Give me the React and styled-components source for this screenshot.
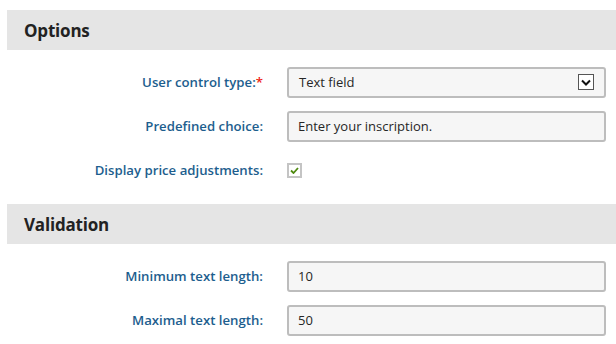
import React from "react";
import styled, { createGlobalStyle } from "styled-components";

const Global = createGlobalStyle`
  html, body { margin: 0; padding: 0; background: #fff; }
  body { font-family: "Open Sans", "Noto Sans", Arial, sans-serif; }
  * { box-sizing: border-box; }
`;

const Page = styled.div`
  padding: 10px 0 0 7px;
  width: 616px;
`;

const SectionHeader = styled.div`
  height: 40px;
  background: #e5e5e5;
  display: flex;
  align-items: center;
  padding-left: 17px;
  margin-top: ${(p) => p.$top || 0}px;
  font-size: 17px;
  font-weight: 700;
  color: #222;
  letter-spacing: -0.2px;
`;

const Form = styled.div`
  display: flex;
  flex-direction: column;
  padding-top: 10px;
`;

const Row = styled.div`
  display: grid;
  grid-template-columns: 256px 1fr;
  column-gap: 24px;
  align-items: center;
  height: 44px;
  padding-right: 10px;
`;

const Label = styled.label`
  text-align: right;
  font-size: 13.2px;
  font-weight: 600;
  color: #1d5e8e;
`;

const Req = styled.span`
  color: #e21;
`;

const TextInput = styled.div`
  height: 31px;
  background: #f6f6f6;
  border: 2px solid #bdbdbd;
  border-radius: 3px;
  display: flex;
  align-items: center;
  padding-left: 9px;
  font-size: 13px;
  color: #262626;
`;

const SelectBox = styled(TextInput)`
  justify-content: space-between;
  padding-right: 10px;
  padding-left: 10px;
`;

const Arrow = styled.span`
  width: 16px;
  height: 16px;
  border: 1px solid #555;
  background: #fff;
  display: flex;
  align-items: center;
  justify-content: center;
`;

const Check = styled.span`
  width: 15px;
  height: 15px;
  border: 2px solid #c4c4c4;
  background: #fff;
  display: flex;
  align-items: center;
  justify-content: center;
`;

export default function App() {
  return (
    <Page>
      <Global />
      <SectionHeader>Options</SectionHeader>
      <Form>
        <Row>
          <Label>
            User control type:<Req>*</Req>
          </Label>
          <SelectBox>
            <span>Text field</span>
            <Arrow>
              <svg width="10" height="7" viewBox="0 0 10 7">
                <path d="M1 1.5 L5 5.5 L9 1.5" fill="none" stroke="#111" strokeWidth="2" />
              </svg>
            </Arrow>
          </SelectBox>
        </Row>
        <Row>
          <Label>Predefined choice:</Label>
          <TextInput>Enter your inscription.</TextInput>
        </Row>
        <Row>
          <Label>Display price adjustments:</Label>
          <div>
            <Check>
              <svg width="9" height="7" viewBox="0 0 9 7">
                <path d="M1 3.5 L3.5 6 L8 1" fill="none" stroke="#4f8a10" strokeWidth="1.8" />
              </svg>
            </Check>
          </div>
        </Row>
      </Form>
      <SectionHeader $top={12}>Validation</SectionHeader>
      <Form>
        <Row>
          <Label>Minimum text length:</Label>
          <TextInput>10</TextInput>
        </Row>
        <Row>
          <Label>Maximal text length:</Label>
          <TextInput>50</TextInput>
        </Row>
      </Form>
    </Page>
  );
}
